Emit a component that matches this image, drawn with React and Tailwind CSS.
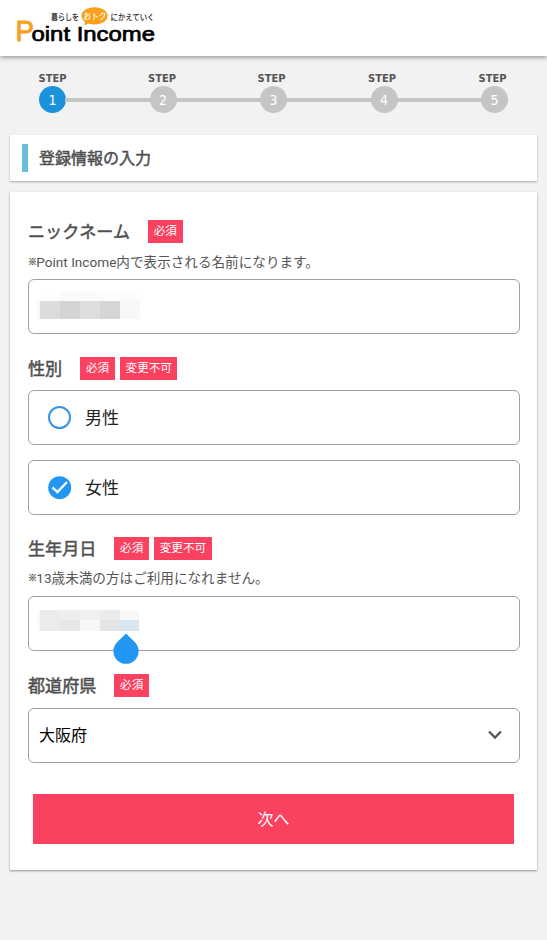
import React from "react";

const STEPS = ["1", "2", "3", "4", "5"];

function Logo() {
  return (
    <svg className="block" width="180" height="56" viewBox="0 0 180 56">
      <g className="font-['Liberation_Sans','Noto_Sans_CJK_JP',sans-serif]">
        <text x="51" y="19.700" fontSize="8.500" textLength="28" lengthAdjust="spacingAndGlyphs" fill="#111" stroke="#111" strokeWidth="0.150">暮らしを</text>
        <path d="M94.500 7.200c7.400 0 13.200 3.700 13.200 8.600s-5.800 8.600-13.200 8.600c-2.300 0-4.500-.4-6.400-1l-3.600 2 .4-3.600c-2.200-1.500-3.500-3.600-3.500-6 0-4.900 5.800-8.600 13.100-8.600z" fill="#f9a01b" />
        <text x="83.500" y="19" fontSize="8.500" textLength="23" lengthAdjust="spacingAndGlyphs" fill="#fff" stroke="#fff" strokeWidth="0.150">おトク</text>
        <text x="110.500" y="19.700" fontSize="8.500" textLength="44" lengthAdjust="spacingAndGlyphs" fill="#111" stroke="#111" strokeWidth="0.150">にかえていく</text>
        <text x="15.500" y="41" fontSize="29" fill="#f9a01b" stroke="#f9a01b" strokeWidth="0.900" textLength="18.500" lengthAdjust="spacingAndGlyphs">P</text>
        <text x="31.500" y="41.200" fontSize="20.500" fill="#000" stroke="#000" strokeWidth="0.700" textLength="123.500" lengthAdjust="spacingAndGlyphs">oint Income</text>
      </g>
    </svg>
  );
}

function Steps() {
  return (
    <div className="flex justify-between px-[39px] pt-[14px]">
      {STEPS.map((n, i) => (
        <div key={n} className="relative w-[27px]">
          {i < 4 && <div className="absolute left-[26px] top-[28px] h-[4px] w-[86px] bg-[#c5c5c5]" />}
          <div className="-ml-[2px] flex h-[16px] w-[31px] items-center justify-center pt-[2px] font-['DejaVu_Sans_Condensed','DejaVu_Sans',sans-serif] text-[11px] font-bold text-[#555] [font-stretch:semi-condensed]">
            <span className={i === 0 ? "" : i === 1 ? "-translate-x-[1px]" : "-translate-x-[2px]"}>STEP</span>
          </div>
          <div className={"flex h-[27px] w-[27px] items-center justify-center rounded-full pt-[2px] font-['DejaVu_Sans_Condensed','DejaVu_Sans',sans-serif] text-[14px] text-white [font-stretch:semi-condensed] " + (i === 0 ? "bg-[#1b93dc]" : "bg-[#c5c5c5]")}>
            {n}
          </div>
        </div>
      ))}
    </div>
  );
}

function Label({ children, fixed }) {
  return (
    <div className="flex h-[23px]">
      <h2 className="mr-[17.800px] pt-[1px] text-[17.100px] leading-[23px] text-[#505050] [-webkit-text-stroke:0.500px_#505050]">{children}</h2>
      <div className="flex gap-[5px] text-[11.600px] leading-[23px] text-white">
        <span className="w-[35px] bg-[#fa4260] text-center">必須</span>
        {fixed && <span className="w-[57.500px] bg-[#fa4260] text-center">変更不可</span>}
      </div>
    </div>
  );
}

function Note({ className, children }) {
  return (
    <p className={"flex text-[13.600px] text-[#555] " + className}>
      <span className="w-[8.300px] text-[9px] [-webkit-text-stroke:0.300px_#555]">※</span>
      <span>{children}</span>
    </p>
  );
}

function Field({ className = "", children }) {
  return (
    <div className={"-ml-[0.500px] flex h-[55px] w-[492px] items-center rounded-[6px] border-[1.500px] border-[#a0a0a0] bg-white " + className}>
      {children}
    </div>
  );
}

export default function App() {
  return (
    <div className="h-[940px] w-[547px] overflow-hidden bg-[#f2f2f2] font-['Roboto','Noto_Sans_CJK_JP',sans-serif]">
      <header className="h-[56px] bg-white shadow-[0_1px_5px_rgba(0,0,0,0.450)]">
        <Logo />
      </header>
      <Steps />
      <div className="ml-[10px] mr-[10.500px] mt-[22px] flex h-[46px] items-center bg-white pl-[12px] shadow-[0_1px_2px_rgba(0,0,0,0.300)]">
        <div className="h-[28px] w-[6px] bg-[#68c0d8]" />
        <h1 className="ml-[11px] pt-[2px] text-[16px] leading-[24px] text-[#505050] [-webkit-text-stroke:0.500px_#505050]">登録情報の入力</h1>
      </div>
      <main className="ml-[10px] mr-[10.500px] mt-[11px] h-[678px] bg-white pl-[18px] pt-[28px] shadow-[0_1px_2px_rgba(0,0,0,0.400)]">
        <Label>ニックネーム</Label>
        <Note className="h-[36px] leading-[38px]">Point Income内で表示される名前になります。</Note>
        <Field className="pl-[8.500px]">
          <div className="-mt-[3px] w-[103px]">
            <div className="ml-[3px] flex h-[9px]">
              <div className="w-[20px] bg-[#fefefe]" />
              <div className="w-[40px] bg-[#fafafa]" />
              <div className="w-[40px] bg-[#fcfcfc]" />
            </div>
            <div className="flex h-[18px]">
              <div className="w-[3px] bg-[#f8f8f8]" />
              <div className="w-[20px] bg-[#dcdcdc]" />
              <div className="w-[20px] bg-[#d4d4d4]" />
              <div className="w-[20px] bg-[#dddddd]" />
              <div className="w-[20px] bg-[#d5d5d5]" />
              <div className="w-[20px] bg-[#f8f8f8]" />
            </div>
          </div>
        </Field>
        <div className="mt-[23px]"><Label fixed>性別</Label></div>
        <Field className="mt-[10px] pl-[19.500px]">
          <span className="h-[23px] w-[23px] rounded-full border-2 border-[#3594e4]" />
          <span className="ml-[14px] pt-[2px] text-[17px] text-[#222]">男性</span>
        </Field>
        <Field className="mt-[15px] pl-[19.500px]">
          <svg width="24" height="24" viewBox="0 0 24 24">
            <circle cx="11.700" cy="11.700" r="11.500" fill="#2196f3" />
            <path d="M4.400 11.400l5 4.700L19 6.100" fill="none" stroke="#fff" strokeWidth="2.200" />
          </svg>
          <span className="ml-[13px] pt-[2px] text-[17px] text-[#222]">女性</span>
        </Field>
        <div className="mt-[22px]"><Label fixed>生年月日</Label></div>
        <Note className="h-[36px] leading-[36px]">13歳未満の方はご利用になれません。</Note>
        <Field className="relative pl-[8.500px]">
          <div className="-mt-[6px] flex">
            <div className="h-[21px] w-[3px] bg-[#f9f9f9]" />
            <div className="h-[21px] w-[20px] bg-[#ebebeb]" />
            <div className="w-[20px]"><div className="h-[10px] bg-[#eeeeee]" /><div className="h-[11px] bg-[#e6e6e6]" /></div>
            <div className="w-[20px]"><div className="h-[10px] bg-[#efefef]" /><div className="h-[11px] bg-[#f7f7f7]" /></div>
            <div className="w-[20px]"><div className="h-[10px] bg-[#ececec]" /><div className="h-[11px] bg-[#e4e4e4]" /></div>
            <div className="w-[19px]"><div className="h-[10px] bg-[#f8f8f8]" /><div className="h-[11px] bg-[#d8e6f2]" /></div>
          </div>
          <svg className="absolute left-[84.500px] top-[36px]" width="26" height="31" viewBox="0 0 26 31">
            <path d="M13 .5L21.900 9.300A12.600 12.600 0 1 1 4.100 9.300Z" fill="#2196f3" />
          </svg>
        </Field>
        <div className="mt-[23px]"><Label>都道府県</Label></div>
        <Field className="mt-[11px] justify-between pl-[10.500px] pr-[17px]">
          <span className="text-[16px] text-black">大阪府</span>
          <svg className="-mt-[2px]" width="14" height="10" viewBox="0 0 14 10">
            <path d="M1 1.500l6 6 6-6" fill="none" stroke="#555" strokeWidth="2.300" />
          </svg>
        </Field>
        <button className="ml-[5px] mt-[31px] block h-[50px] w-[481px] bg-[#fa4260] pt-[2px] text-[16px] text-white">次へ</button>
      </main>
    </div>
  );
}
